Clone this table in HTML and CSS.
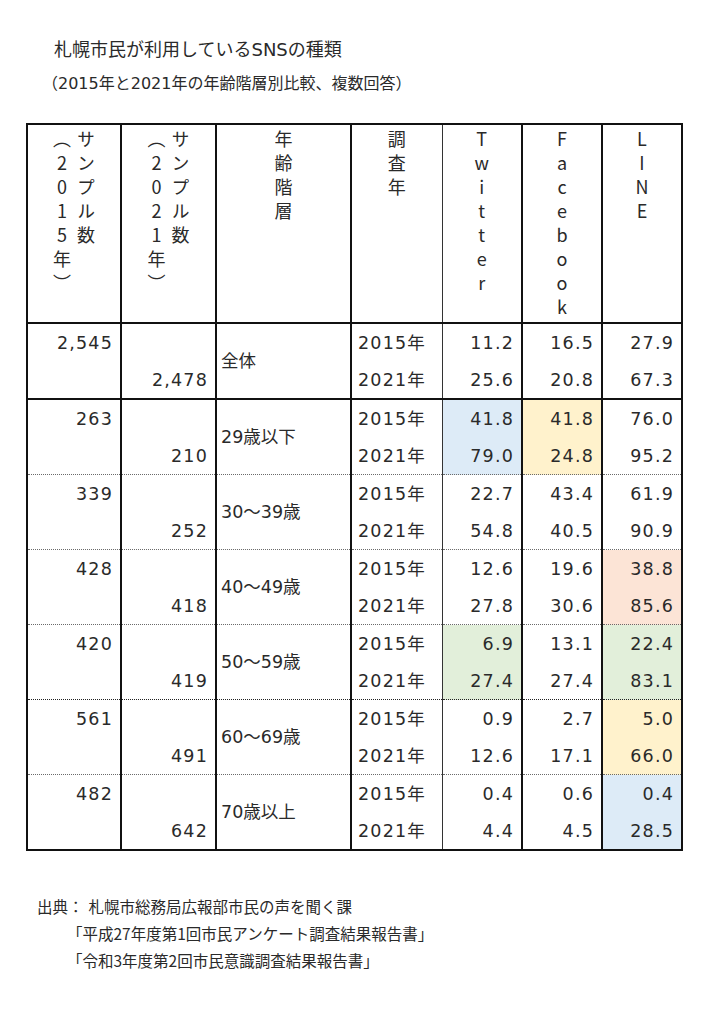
FILE: index.html
```html
<!DOCTYPE html>
<html lang="ja">
<head>
<meta charset="utf-8">
<title>札幌市民が利用しているSNSの種類</title>
<link rel="stylesheet" href="styles.css">
</head>
<body>
<main class="page">
  <h1 class="title">札幌市民が利用しているSNSの種類</h1>
  <p class="subtitle">（2015年と2021年の年齢階層別比較、複数回答）</p>

  <table class="sns">
    <colgroup>
      <col class="w-s1"><col class="w-s2"><col class="w-age"><col class="w-year"><col class="w-d"><col class="w-d"><col class="w-d">
    </colgroup>
    <thead>
      <tr class="head">
        <th class="c1"><span class="vt">サンプル数<br>（2015年）</span></th>
        <th class="c2"><span class="vt">サンプル数<br>（2021年）</span></th>
        <th class="c3"><span class="vt">年齢階層</span></th>
        <th class="c4"><span class="vt">調査年</span></th>
        <th class="c5"><span class="vt">Twitter</span></th>
        <th class="c6"><span class="vt">Facebook</span></th>
        <th class="c7"><span class="vt">LINE</span></th>
      </tr>
    </thead>
    <tbody>
      <tr class="r">
        <td class="c1 num">2,545</td><td class="c2"></td>
        <td class="c3 age" rowspan="2">全体</td>
        <td class="c4 yr">2015年</td>
        <td class="c5 num">11.2</td><td class="c6 num">16.5</td><td class="c7 num">27.9</td>
      </tr>
      <tr class="r">
        <td class="c1"></td><td class="c2 num">2,478</td>
        <td class="c4 yr">2021年</td>
        <td class="c5 num">25.6</td><td class="c6 num">20.8</td><td class="c7 num">67.3</td>
      </tr>

      <tr class="r grp solid">
        <td class="c1 num">263</td><td class="c2"></td>
        <td class="c3 age" rowspan="2">29歳以下</td>
        <td class="c4 yr">2015年</td>
        <td class="c5 num blue">41.8</td><td class="c6 num yellow">41.8</td><td class="c7 num">76.0</td>
      </tr>
      <tr class="r">
        <td class="c1"></td><td class="c2 num">210</td>
        <td class="c4 yr">2021年</td>
        <td class="c5 num blue">79.0</td><td class="c6 num yellow">24.8</td><td class="c7 num">95.2</td>
      </tr>

      <tr class="r grp">
        <td class="c1 num">339</td><td class="c2"></td>
        <td class="c3 age" rowspan="2">30～39歳</td>
        <td class="c4 yr">2015年</td>
        <td class="c5 num">22.7</td><td class="c6 num">43.4</td><td class="c7 num">61.9</td>
      </tr>
      <tr class="r">
        <td class="c1"></td><td class="c2 num">252</td>
        <td class="c4 yr">2021年</td>
        <td class="c5 num">54.8</td><td class="c6 num">40.5</td><td class="c7 num">90.9</td>
      </tr>

      <tr class="r grp">
        <td class="c1 num">428</td><td class="c2"></td>
        <td class="c3 age" rowspan="2">40～49歳</td>
        <td class="c4 yr">2015年</td>
        <td class="c5 num">12.6</td><td class="c6 num">19.6</td><td class="c7 num peach">38.8</td>
      </tr>
      <tr class="r">
        <td class="c1"></td><td class="c2 num">418</td>
        <td class="c4 yr">2021年</td>
        <td class="c5 num">27.8</td><td class="c6 num">30.6</td><td class="c7 num peach">85.6</td>
      </tr>

      <tr class="r grp">
        <td class="c1 num">420</td><td class="c2"></td>
        <td class="c3 age" rowspan="2">50～59歳</td>
        <td class="c4 yr">2015年</td>
        <td class="c5 num green">6.9</td><td class="c6 num">13.1</td><td class="c7 num green">22.4</td>
      </tr>
      <tr class="r">
        <td class="c1"></td><td class="c2 num">419</td>
        <td class="c4 yr">2021年</td>
        <td class="c5 num green">27.4</td><td class="c6 num">27.4</td><td class="c7 num green">83.1</td>
      </tr>

      <tr class="r grp dark">
        <td class="c1 num">561</td><td class="c2"></td>
        <td class="c3 age" rowspan="2">60～69歳</td>
        <td class="c4 yr">2015年</td>
        <td class="c5 num">0.9</td><td class="c6 num">2.7</td><td class="c7 num yellow">5.0</td>
      </tr>
      <tr class="r">
        <td class="c1"></td><td class="c2 num">491</td>
        <td class="c4 yr">2021年</td>
        <td class="c5 num">12.6</td><td class="c6 num">17.1</td><td class="c7 num yellow">66.0</td>
      </tr>

      <tr class="r grp">
        <td class="c1 num">482</td><td class="c2"></td>
        <td class="c3 age" rowspan="2">70歳以上</td>
        <td class="c4 yr">2015年</td>
        <td class="c5 num">0.4</td><td class="c6 num">0.6</td><td class="c7 num blue">0.4</td>
      </tr>
      <tr class="r">
        <td class="c1"></td><td class="c2 num">642</td>
        <td class="c4 yr">2021年</td>
        <td class="c5 num">4.4</td><td class="c6 num">4.5</td><td class="c7 num blue">28.5</td>
      </tr>
    </tbody>
  </table>

  <footer class="source">
    <p class="src-line"><span class="src-label">出典：</span>札幌市総務局広報部市民の声を聞く課</p>
    <p class="src-line indent">「平成27年度第1回市民アンケート調査結果報告書」</p>
    <p class="src-line indent">「令和3年度第2回市民意識調査結果報告書」</p>
  </footer>
</main>
</body>
</html>
```

FILE: styles.css
```css
html, body {
  margin: 0;
  padding: 0;
  background: #ffffff;
}

body {
  color: #2a2a2a;
  font-family: "DejaVu Sans", "Noto Sans CJK JP", sans-serif;
}

.page {
  padding: 38px 0 40px 26px;
}

.title {
  margin: 0 0 0 28px;
  font-size: 18px;
  font-weight: normal;
  line-height: 24px;
}

.subtitle {
  margin: 11px 0 0 16px;
  font-size: 16px;
  line-height: 22px;
}

/* ---------- table ---------- */
.sns {
  margin-top: 28px;
  border-collapse: collapse;
  border: 2px solid #111;
  table-layout: fixed;
}

.w-s1 { width: 94px; }
.w-s2 { width: 95px; }
.w-age { width: 135px; }
.w-year { width: 91px; }
.w-d { width: 80px; }

.sns th,
.sns td {
  padding: 0;
  border: 0;
}

.c2, .c3, .c4, .c6, .c7 {
  border-left: 2px solid #111 !important;
}
.c5 {
  border-left: 1px solid #333 !important;
}

.head th {
  height: 187px;
  vertical-align: top;
  text-align: center;
  font-weight: normal;
  line-height: 0;
  padding-top: 5px;
  border-bottom: 2px solid #111;
}

.vt {
  display: inline-block;
  vertical-align: top;
  text-align: start;
  writing-mode: vertical-rl;
  text-orientation: upright;
  font-family: "Noto Sans CJK JP", sans-serif;
  font-size: 18px;
  line-height: 24px;
  letter-spacing: 6px;
  color: #2a2a2a;
}

.r td {
  height: 37px;
  font-size: 17.5px;
  line-height: 22px;
  vertical-align: middle;
}

.grp td {
  border-top: 1px dotted #6a6a6a;
}
.grp.dark td {
  border-top: 1px dotted #222;
}
.grp.solid td {
  border-top: 2px solid #111;
}

.num {
  text-align: right;
  padding-right: 7px !important;
  letter-spacing: 1.2px;
}
.yr {
  text-align: left;
  padding-left: 6px !important;
  letter-spacing: 1.2px;
}
.age {
  text-align: left;
  padding-left: 4px !important;
}

.blue { background: #ddebf7; }
.yellow { background: #fff2cc; }
.peach { background: #fce4d6; }
.green { background: #e2efda; }

/* ---------- source ---------- */
.source {
  margin: 42px 0 0 11px;
  font-family: "Noto Sans CJK JP", sans-serif;
  font-size: 15.5px;
  line-height: 27px;
}
.src-line {
  margin: 0;
}
.src-label {
  margin-right: 5px;
}
.indent {
  padding-left: 30px;
}
```
